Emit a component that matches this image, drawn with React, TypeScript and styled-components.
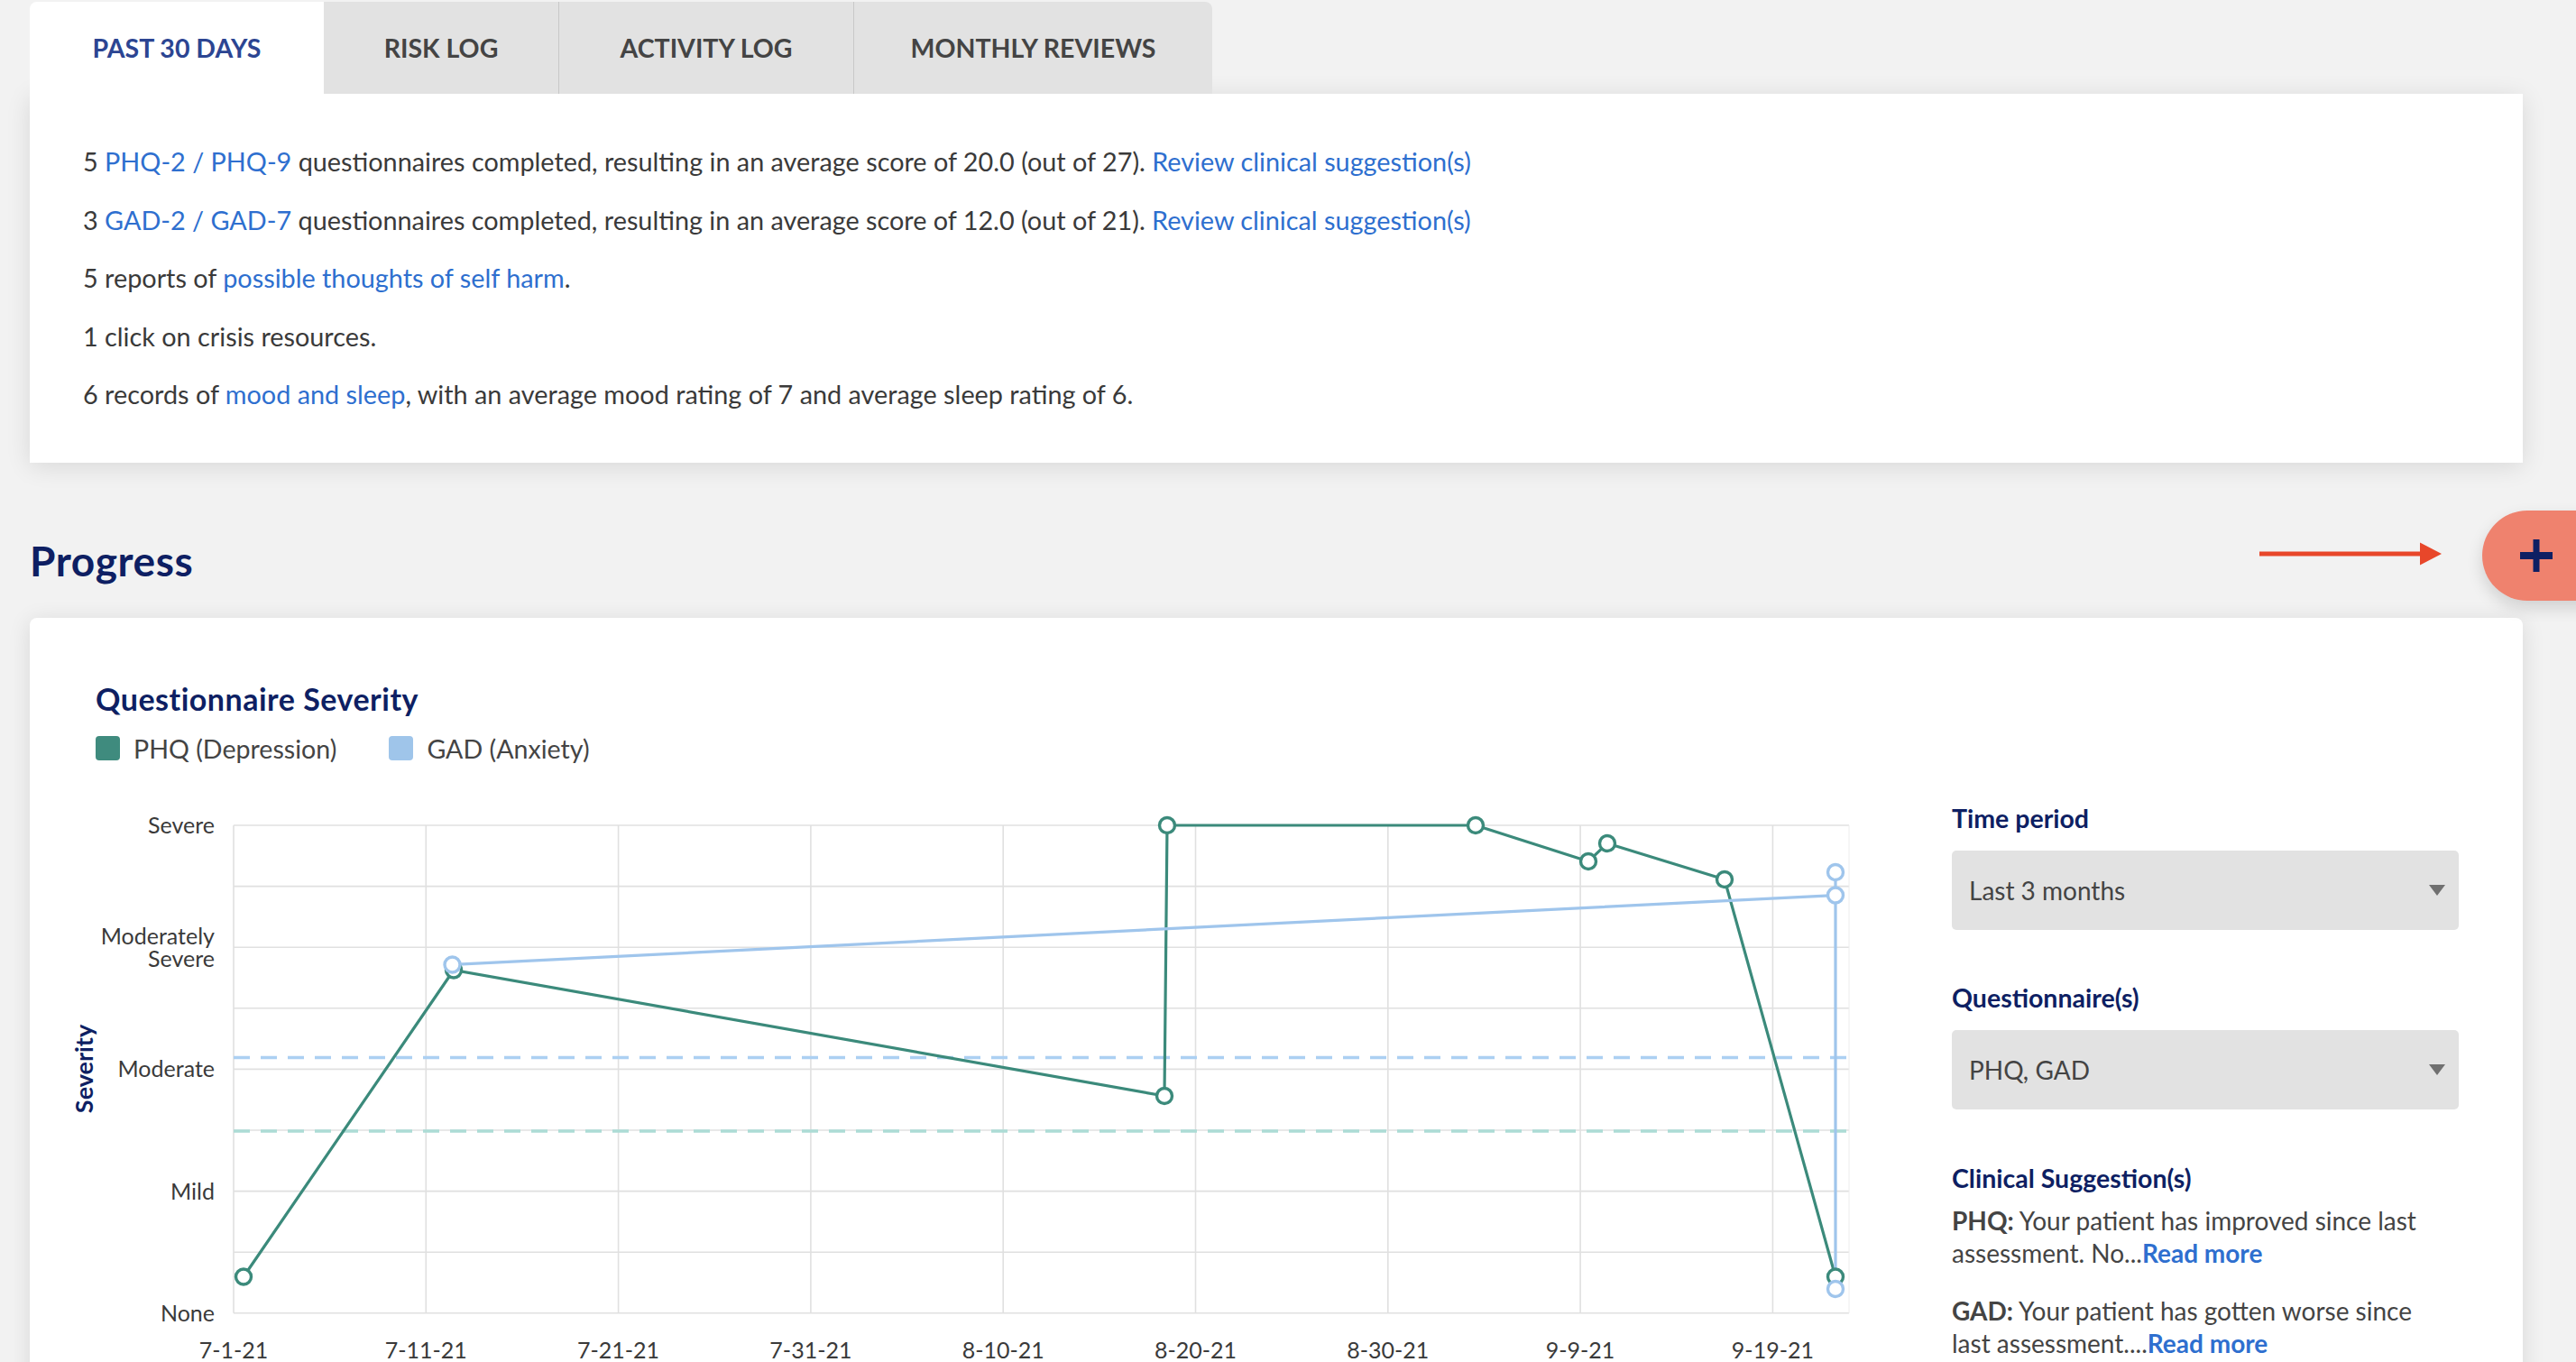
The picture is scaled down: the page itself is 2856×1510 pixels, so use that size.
import React from 'react';
import styled, { createGlobalStyle } from 'styled-components';

const GlobalStyle = createGlobalStyle`
  html, body {
    margin: 0;
    padding: 0;
    overflow: hidden;
    background: #f2f2f2;
  }
  body {
    font-family: Lato, "Open Sans", sans-serif;
    color: #3a3a3a;
  }
  * { box-sizing: border-box; }
`;

const NAVY = '#0e1f63';
const LINK = '#2e6fcf';
const GREEN = '#3b8a7b';
const BLUE = '#9fc5ec';

const Page = styled.div`
  position: relative;
  width: 2856px;
  height: 1510px;
  padding: 0 59px 0 33px;
  overflow: hidden;
`;

const TabBar = styled.div`
  position: relative;
  z-index: 1;
  display: flex;
  margin-top: 2px;
  height: 102px;
`;

const Tab = styled.div<{ $w: number; $active?: boolean; $divider?: boolean; $last?: boolean }>`
  display: flex;
  align-items: center;
  justify-content: center;
  width: ${p => p.$w}px;
  font-size: 28.5px;
  font-weight: 700;
  text-transform: uppercase;
  color: ${p => (p.$active ? '#2c4592' : '#444')};
  background: ${p => (p.$active ? '#fff' : '#e2e2e2')};
  border-left: ${p => (p.$divider ? '1.5px solid #c8c8c8' : 'none')};
  border-radius: ${p => (p.$active ? '8px 0 0 0' : p.$last ? '0 8px 0 0' : '0')};
`;

const Summary = styled.div`
  display: flex;
  flex-direction: column;
  gap: 28.5px;
  padding: 57px 59px 58px;
  background: #fff;
  box-shadow: 0 4px 26px rgba(0, 0, 0, 0.11);
`;

const Line = styled.p`
  margin: 0;
  font-size: 28.8px;
  line-height: 36px;
`;

const Link = styled.a`
  color: ${LINK};
  text-decoration: none;
`;

const SectionHeader = styled.div`
  display: flex;
  align-items: center;
  height: 46px;
  margin: 86px 0 40px;
`;

const SectionTitle = styled.h2`
  margin: 0;
  font-size: 46px;
  line-height: 46px;
  letter-spacing: 0.6px;
  font-weight: 700;
  color: ${NAVY};
`;

const ProgressCard = styled.div`
  display: grid;
  grid-template-columns: 1fr 562px;
  column-gap: 114px;
  height: 900px;
  padding: 70px 71px 0 40px;
  background: #fff;
  border-radius: 8px 8px 0 0;
  box-shadow: 0 4px 26px rgba(0, 0, 0, 0.11);
`;

const ChartColumn = styled.div`
  display: flex;
  flex-direction: column;
`;

const ChartTitle = styled.h3`
  margin: 0;
  padding-left: 33px;
  font-size: 34px;
  line-height: 40px;
  letter-spacing: 0.5px;
  font-weight: 700;
  color: ${NAVY};
`;

const Legend = styled.div`
  display: flex;
  align-items: center;
  gap: 58px;
  height: 27px;
  margin-top: 21px;
  padding-left: 33px;
`;

const LegendItem = styled.div`
  display: flex;
  align-items: center;
  gap: 15px;
  font-size: 28.6px;
  color: #444;
`;

const Swatch = styled.span<{ $color: string }>`
  width: 27px;
  height: 27px;
  border-radius: 4px;
  background: ${p => p.$color};
`;

const ChartSvg = styled.svg`
  display: block;
  margin-top: 37px;
  overflow: visible;
  font-family: Lato, "Open Sans", sans-serif;
`;

const Side = styled.div`
  display: flex;
  flex-direction: column;
  padding-top: 135px;
`;

const FieldLabel = styled.div<{ $gap?: number }>`
  margin-top: ${p => p.$gap ?? 0}px;
  font-size: 28.5px;
  line-height: 34px;
  font-weight: 700;
  color: ${NAVY};
`;

const Select = styled.div`
  display: flex;
  align-items: center;
  justify-content: space-between;
  height: 88px;
  margin-top: 19px;
  padding: 0 15px 0 19px;
  background: #e2e2e2;
  border-radius: 5px;
  font-size: 28px;
  color: #444;
`;

const Caret = styled.span`
  width: 0;
  height: 0;
  border-left: 9.5px solid transparent;
  border-right: 9.5px solid transparent;
  border-top: 12px solid #707070;
`;

const Suggestion = styled.p<{ $gap: number }>`
  margin: ${p => p.$gap}px 0 0;
  font-size: 28px;
  line-height: 36px;
  color: #444;
  b { font-weight: 700; }
`;

const ReadMore = styled.a`
  color: ${LINK};
  font-weight: 700;
  text-decoration: none;
`;

const Fab = styled.button`
  position: fixed;
  left: 2752px;
  top: 566px;
  width: 130px;
  height: 100px;
  padding: 0 0 0 42px;
  border: none;
  border-radius: 50px 0 0 50px;
  background: #ef826e;
  box-shadow: 0 8px 18px rgba(0, 0, 0, 0.14);
  display: flex;
  align-items: center;
`;

const Pointer = styled.svg`
  position: absolute;
  left: 2505px;
  top: 601px;
`;

// chart geometry, svg coords
const LEFT = 186;
const RIGHT = 1977;
const TOP = 35;
const STEP_Y = 67.6;
const STEP_X = 213.3;
const gy = (i: number) => TOP + i * STEP_Y;
const BOTTOM = gy(8);

const xTicks = ['7-1-21', '7-11-21', '7-21-21', '7-31-21', '8-10-21', '8-20-21', '8-30-21', '9-9-21', '9-19-21'];

const yLabels: { i: number; lines: string[] }[] = [
  { i: 0, lines: ['Severe'] },
  { i: 2, lines: ['Moderately', 'Severe'] },
  { i: 4, lines: ['Moderate'] },
  { i: 6, lines: ['Mild'] },
  { i: 8, lines: ['None'] },
];

const phq: [number, number][] = [
  [197, 535.5], [430, 195.5], [1218, 335], [1221, 35], [1563, 35],
  [1688, 75], [1709, 55], [1839, 95], [1962, 535.5],
];
const gad: [number, number][] = [[428.5, 189.5], [1962, 112.5], [1962, 87], [1962, 549]];

const toPath = (pts: [number, number][]) => pts.map(([x, y], i) => `${i ? 'L' : 'M'}${x} ${y}`).join(' ');

const SeverityChart = () => (
  <ChartSvg width={1977} height={660} viewBox="0 0 1977 660">
    {Array.from({ length: 9 }, (_, i) => (
      <line key={'h' + i} x1={LEFT} x2={RIGHT} y1={gy(i)} y2={gy(i)} stroke="#e0e0e0" strokeWidth={1.6} />
    ))}
    {xTicks.map((_, k) => (
      <line key={'v' + k} x1={LEFT + k * STEP_X} x2={LEFT + k * STEP_X} y1={TOP} y2={BOTTOM} stroke="#e0e0e0" strokeWidth={1.6} />
    ))}
    <line x1={RIGHT} x2={RIGHT} y1={TOP} y2={BOTTOM} stroke="#ececec" strokeWidth={1} />
    <line x1={LEFT} x2={RIGHT} y1={292.5} y2={292.5} stroke="#acd0f2" strokeWidth={3.4} strokeDasharray="18 12" />
    <line x1={LEFT} x2={RIGHT} y1={374} y2={374} stroke="#acdcd5" strokeWidth={3.4} strokeDasharray="18 12" />

    {yLabels.map(({ i, lines }) =>
      lines.map((t, j) => (
        <text key={t + i + j} x={165} y={gy(i) + 9 + (lines.length === 2 ? (j === 0 ? -12.5 : 12.5) : 0)} textAnchor="end" fontSize={25} fill="#3a3a3a">
          {t}
        </text>
      ))
    )}
    {xTicks.map((t, k) => (
      <text key={t} x={LEFT + k * STEP_X} y={626} textAnchor="middle" fontSize={25} fill="#3a3a3a">
        {t}
      </text>
    ))}
    <text transform="translate(30 305) rotate(-90)" textAnchor="middle" fontSize={27} fontWeight={700} fill={NAVY}>
      Severity
    </text>

    <path d={toPath(phq)} fill="none" stroke={GREEN} strokeWidth={3.2} strokeLinejoin="round" />
    <path d={toPath(gad)} fill="none" stroke={BLUE} strokeWidth={3.2} strokeLinejoin="round" />
    {phq.map(([x, y], i) => (
      <circle key={'p' + i} cx={x} cy={y} r={8.5} fill="#fff" stroke={GREEN} strokeWidth={3.4} />
    ))}
    {gad.map(([x, y], i) => (
      <circle key={'g' + i} cx={x} cy={y} r={8.5} fill="#fff" stroke={BLUE} strokeWidth={3.4} />
    ))}
  </ChartSvg>
);

const App = () => {
  return (
    <Page>
      <GlobalStyle />
      <TabBar>
        <Tab $w={326} $active>Past 30 days</Tab>
        <Tab $w={260}>Risk log</Tab>
        <Tab $w={327} $divider>Activity log</Tab>
        <Tab $w={398} $divider $last>Monthly reviews</Tab>
      </TabBar>
      <Summary>
        <Line>
          5 <Link>PHQ-2 / PHQ-9</Link> questionnaires completed, resulting in an average score of 20.0 (out of 27).{' '}
          <Link>Review clinical suggestion(s)</Link>
        </Line>
        <Line>
          3 <Link>GAD-2 / GAD-7</Link> questionnaires completed, resulting in an average score of 12.0 (out of 21).{' '}
          <Link>Review clinical suggestion(s)</Link>
        </Line>
        <Line>
          5 reports of <Link>possible thoughts of self harm</Link>.
        </Line>
        <Line>1 click on crisis resources.</Line>
        <Line>
          6 records of <Link>mood and sleep</Link>, with an average mood rating of 7 and average sleep rating of 6.
        </Line>
      </Summary>

      <SectionHeader>
        <SectionTitle>Progress</SectionTitle>
      </SectionHeader>

      <ProgressCard>
        <ChartColumn>
          <ChartTitle>Questionnaire Severity</ChartTitle>
          <Legend>
            <LegendItem>
              <Swatch $color="#3f8b7e" />
              PHQ (Depression)
            </LegendItem>
            <LegendItem>
              <Swatch $color="#9fc5ea" />
              GAD (Anxiety)
            </LegendItem>
          </Legend>
          <SeverityChart />
        </ChartColumn>

        <Side>
          <FieldLabel>Time period</FieldLabel>
          <Select>
            Last 3 months
            <Caret />
          </Select>
          <FieldLabel $gap={58}>Questionnaire(s)</FieldLabel>
          <Select>
            PHQ, GAD
            <Caret />
          </Select>
          <FieldLabel $gap={59}>Clinical Suggestion(s)</FieldLabel>
          <Suggestion $gap={12}>
            <b>PHQ:</b> Your patient has improved since last
            <br />
            assessment. No...<ReadMore>Read more</ReadMore>
          </Suggestion>
          <Suggestion $gap={28}>
            <b>GAD:</b> Your patient has gotten worse since
            <br />
            last assessment....<ReadMore>Read more</ReadMore>
          </Suggestion>
        </Side>
      </ProgressCard>

      <Pointer width={202} height={26} viewBox="0 0 202 26">
        <rect x={0} y={10.5} width={182} height={5} fill="#e8472a" />
        <polygon points="178,0.5 202,13 178,25.5" fill="#e8472a" />
      </Pointer>
      <Fab aria-label="Add">
        <svg width={36} height={36} viewBox="0 0 36 36">
          <rect x={0} y={14} width={36} height={8} fill={NAVY} />
          <rect x={14.5} y={0} width={7} height={36} fill={NAVY} />
        </svg>
      </Fab>
    </Page>
  );
};

export default App;
